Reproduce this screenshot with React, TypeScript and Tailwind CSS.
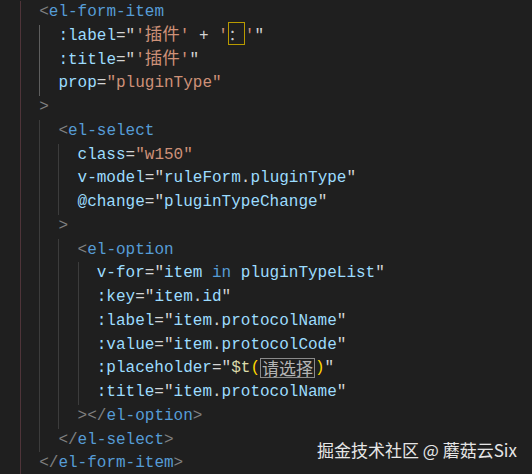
import type { ReactNode } from 'react';

const P = 'text-[#808080]';
const TAG = 'text-[#569cd6]';
const ATTR = 'text-[#9cdcfe]';
const OP = 'text-[#d4d4d4]';
const STR = 'text-[#ce9178]';
const FN = 'text-[#dcdcaa]';
const BR = 'text-[#ffd700]';

const cjk = "font-['Noto_Sans_CJK_SC',sans-serif]";

type Line = { indent: number; active?: boolean; tokens: ReactNode[] };

const t = (text: string, cls: string) => <span className={cls}>{text}</span>;

const zh = (text: string, cls: string) => (
  <span className={`${cls} ${cjk} text-[17.5px] leading-[0]`}>{text}</span>
);

const lines: Line[] = [
  { indent: 1, tokens: [t('<', P), t('el-form-item', TAG)] },
  {
    indent: 2,
    active: true,
    tokens: [
      t(':label', ATTR), t('=', OP), t('"', OP), t("'", STR), zh('插件', STR), t("'", STR),
      t(' + ', OP), t("'", STR),
      <span className={`border border-[#b89a00] leading-[0] text-[15px] text-[#cccccc] ${cjk}`}>：</span>,
      t("'", STR), t('"', OP),
    ],
  },
  {
    indent: 2,
    active: true,
    tokens: [t(':title', ATTR), t('=', OP), t('"', OP), t("'", STR), zh('插件', STR), t("'", STR), t('"', OP)],
  },
  { indent: 2, active: true, tokens: [t('prop', ATTR), t('=', OP), t('"pluginType"', STR)] },
  { indent: 1, tokens: [t('>', P)] },
  { indent: 2, tokens: [t('<', P), t('el-select', TAG)] },
  { indent: 3, tokens: [t('class', ATTR), t('=', OP), t('"w150"', STR)] },
  {
    indent: 3,
    tokens: [t('v-model', ATTR), t('=', OP), t('"', OP), t('ruleForm', ATTR), t('.', OP), t('pluginType', ATTR), t('"', OP)],
  },
  { indent: 3, tokens: [t('@change', ATTR), t('=', OP), t('"', OP), t('pluginTypeChange', ATTR), t('"', OP)] },
  { indent: 2, tokens: [t('>', P)] },
  { indent: 3, tokens: [t('<', P), t('el-option', TAG)] },
  {
    indent: 4,
    tokens: [t('v-for', ATTR), t('=', OP), t('"', OP), t('item', ATTR), t(' in ', TAG), t('pluginTypeList', ATTR), t('"', OP)],
  },
  { indent: 4, tokens: [t(':key', ATTR), t('=', OP), t('"', OP), t('item', ATTR), t('.', OP), t('id', ATTR), t('"', OP)] },
  {
    indent: 4,
    tokens: [t(':label', ATTR), t('=', OP), t('"', OP), t('item', ATTR), t('.', OP), t('protocolName', ATTR), t('"', OP)],
  },
  {
    indent: 4,
    tokens: [t(':value', ATTR), t('=', OP), t('"', OP), t('item', ATTR), t('.', OP), t('protocolCode', ATTR), t('"', OP)],
  },
  {
    indent: 4,
    tokens: [
      t(':placeholder', ATTR), t('=', OP), t('"', OP), t('$t', FN), t('(', BR),
      <span className={`inline-block align-middle border border-[#8a8a8a] px-px leading-[18px] text-[17px] text-[#b4b4b4] ${cjk}`}>请选择</span>,
      t(')', BR), t('"', OP),
    ],
  },
  {
    indent: 4,
    tokens: [t(':title', ATTR), t('=', OP), t('"', OP), t('item', ATTR), t('.', OP), t('protocolName', ATTR), t('"', OP)],
  },
  { indent: 3, tokens: [t('></', P), t('el-option', TAG), t('>', P)] },
  { indent: 2, tokens: [t('</', P), t('el-select', TAG), t('>', P)] },
  { indent: 1, tokens: [t('</', P), t('el-form-item', TAG), t('>', P)] },
];

function Guides({ count, active }: { count: number; active?: boolean }) {
  return (
    <>
      {Array.from({ length: count }).map((_, i) => (
        <span
          key={i}
          className={
            i === 0
              ? 'w-[19.2px] shrink-0 border-l border-[#4f3439]'
              : active && i === 1
                ? 'w-[19.2px] shrink-0 border-l border-[#5e5e5e]'
                : 'w-[19.2px] shrink-0 border-l border-[#3c3c3c]'
          }
        />
      ))}
    </>
  );
}

export default function App() {
  return (
    <div className="relative w-[532px] h-[474px] overflow-hidden bg-[#1f1f1f]">
      <div className="mt-[1px] pl-[20px] font-['Liberation_Mono',monospace] text-[16px]">
        {lines.map((line, i) => (
          <div key={i} className="flex h-[23.75px]">
            <Guides count={line.indent} active={line.active} />
            <div className="whitespace-pre leading-[23.75px]">
              {line.tokens.map((tok, j) => (
                <span key={j}>{tok}</span>
              ))}
            </div>
          </div>
        ))}
      </div>

      {/* watermark */}
      <div className="absolute right-[15px] top-[438px] leading-[24px] text-[17px] text-[#e6e6e6] font-['Noto_Sans_CJK_SC',sans-serif]">
        掘金技术社区 @ 蘑菇云Six
      </div>
    </div>
  );
}
